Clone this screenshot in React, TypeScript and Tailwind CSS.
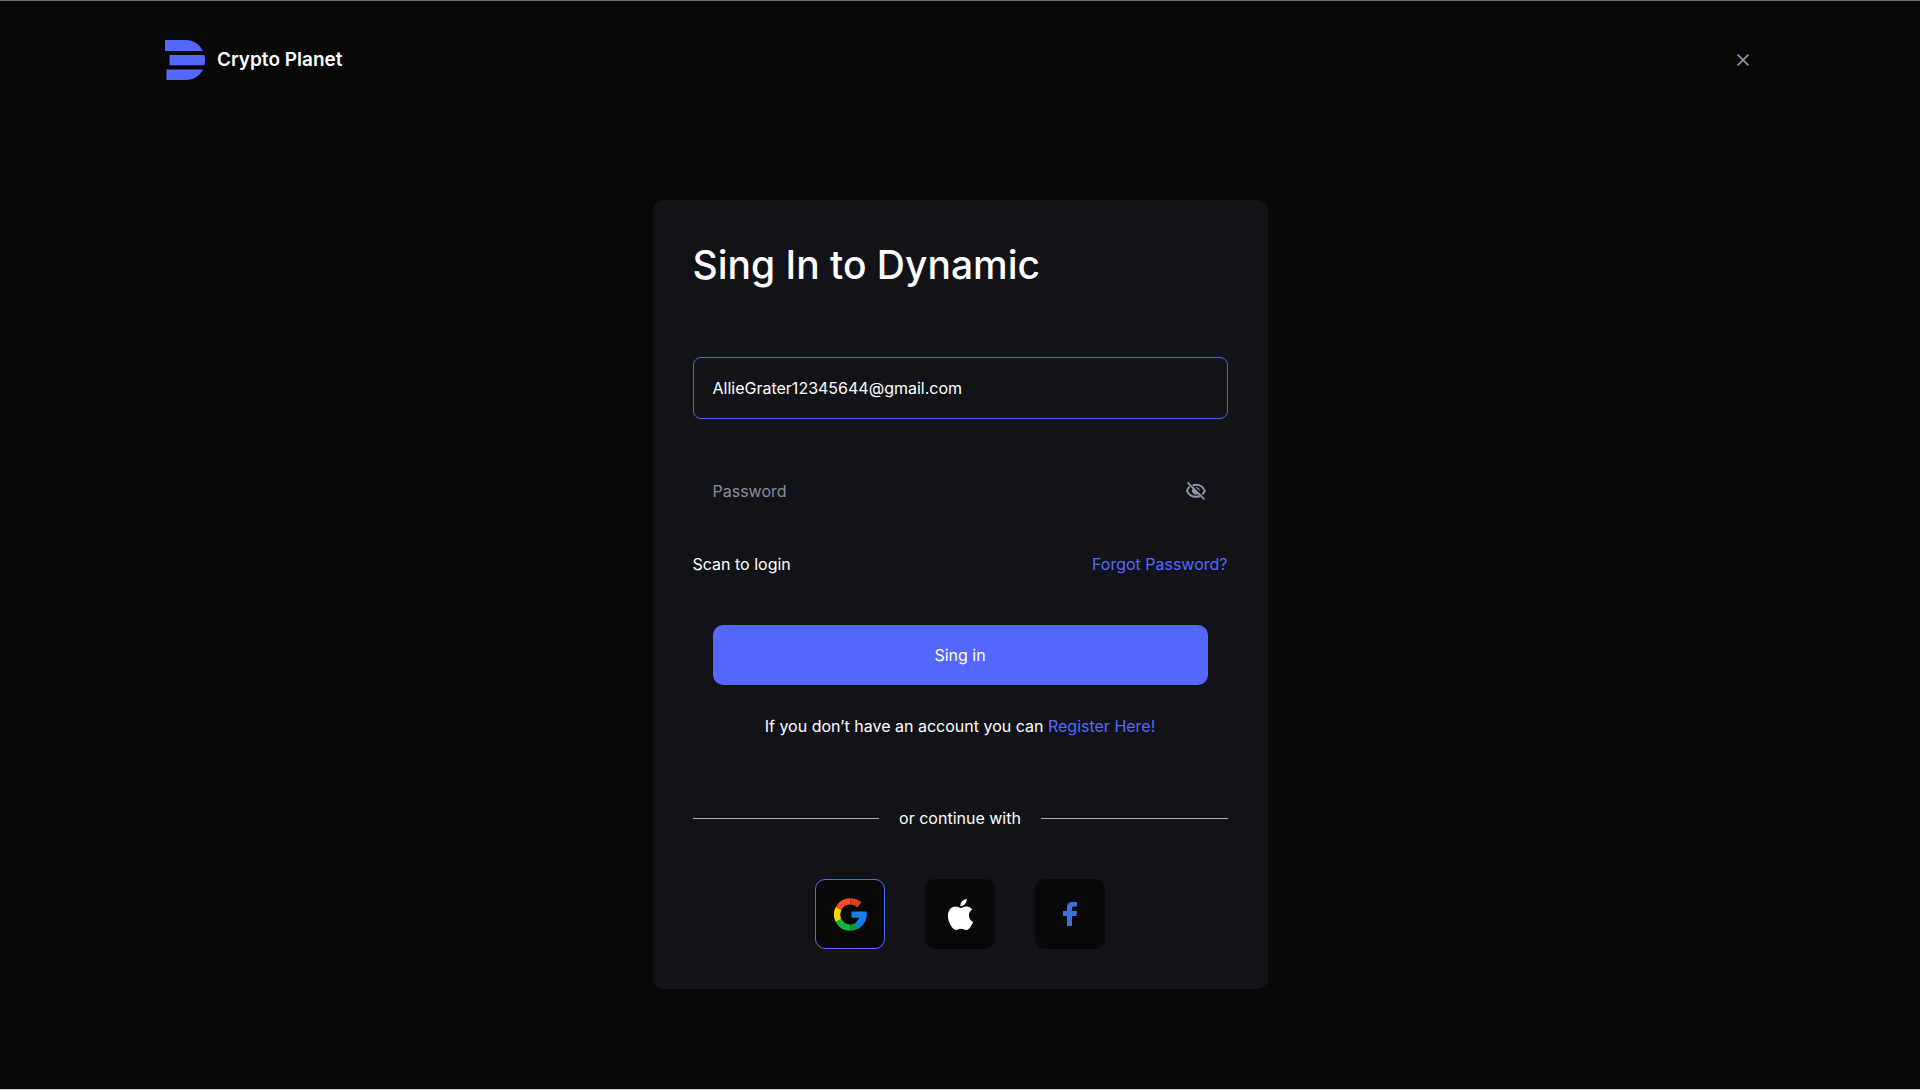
import { useState } from "react";
import type { ReactNode } from "react";

function Logo() {
  return (
    <svg viewBox="0 0 40 40" className="size-10" fill="#5468ff" aria-hidden="true">
      <path d="M0 0h21c7.500 0 13.500 4.500 17 11H0z" />
      <path d="M4.500 15h34.900c.8 3.500.8 7 0 10.200H4.500z" />
      <path d="M1.500 29.500H38C34.500 36 28.500 40 21 40H1.500z" />
    </svg>
  );
}

function EyeOff() {
  return (
    <svg viewBox="0 0 24 24" className="size-6" fill="none" stroke="#9494a8" strokeWidth="1.900" aria-hidden="true">
      <path d="M8.600 6.300c1-.3 2.200-.5 3.400-.5 4 0 7.200 2.200 8.800 6-.6 1.400-1.500 2.500-2.500 3.500" />
      <path d="M5.600 7.800c-1.100 1-2 2.300-2.600 4 1.600 3.800 5 6 9 6 1.400 0 2.700-.3 3.900-.8" />
      <path d="M3.400 3.400 20.400 20.400" />
      <path d="M9 9.300a3.900 3.900 0 0 0 5.700 5.300z" fill="#9494a8" stroke="none" />
      <path d="M11.600 8a3.900 3.900 0 0 1 4.200 4.200z" fill="#9494a8" stroke="none" />
    </svg>
  );
}

function GoogleIcon() {
  return (
    <svg viewBox="0 0 34 34" className="size-[33px]" fill="none" strokeWidth="6.500" aria-hidden="true">
      <path d="M4.700 10.800A13.600 13.600 0 0 1 17 3.500" stroke="#ff4c26" />
      <path d="M17 3.500a13.600 13.600 0 0 1 9.100 3.500" stroke="#d93f21" />
      <path d="M4.700 10.800a13.600 13.600 0 0 0 0 12.400" stroke="#ffd500" />
      <path d="M4.700 23.200A13.600 13.600 0 0 0 17 30.500" stroke="#17b34a" />
      <path d="M17 30.500a13.600 13.600 0 0 0 7-2" stroke="#0f993e" />
      <path d="M18 14h15.600a16.700 16.700 0 0 1-8.100 17.300l-4-5.200a10 10 0 0 0 4.500-5.700H18z" fill="#167ee6" />
    </svg>
  );
}

function AppleIcon() {
  return (
    <svg viewBox="0 0 24 24" className="size-[31px]" fill="#fff" aria-hidden="true">
      <path d="M12.152 6.896c-.948 0-2.415-1.078-3.960-1.040-2.040.027-3.910 1.183-4.961 3.014-2.117 3.675-.546 9.103 1.519 12.090 1.013 1.454 2.208 3.090 3.792 3.039 1.520-.065 2.090-.987 3.935-.987 1.831 0 2.350.987 3.960.948 1.637-.026 2.676-1.480 3.676-2.948 1.156-1.688 1.636-3.325 1.662-3.415-.039-.013-3.182-1.221-3.220-4.857-.026-3.040 2.480-4.494 2.597-4.559-1.429-2.090-3.623-2.324-4.390-2.376-2-.156-3.675 1.090-4.610 1.090zM15.530 3.830c.843-1.012 1.400-2.427 1.245-3.830-1.207.052-2.662.805-3.532 1.818-.780.896-1.454 2.338-1.273 3.714 1.338.104 2.715-.688 3.559-1.701" />
    </svg>
  );
}

function FacebookIcon() {
  return (
    <svg viewBox="0 0 14 24" className="h-6 w-[14px]" fill="#4070de" aria-hidden="true">
      <path d="M4 24V14H0V9h4V5.700C4 2 6 0 9.600 0H14v4.500h-3C9.500 4.500 9 5.200 9 6.500V9h5l-.6 5H9v10z" />
    </svg>
  );
}

function SocialButton({ label, selected, onSelect, children }: { label: string; selected: boolean; onSelect: () => void; children: ReactNode }) {
  return (
    <button
      type="button"
      aria-label={label}
      aria-pressed={selected}
      onClick={onSelect}
      className={`flex size-[70px] items-center justify-center rounded-[10px] border bg-[#080808] ${selected ? "border-[#5468ff]" : "border-transparent"}`}
    >
      {children}
    </button>
  );
}

export default function App() {
  const [email, setEmail] = useState("AllieGrater12345644@gmail.com");
  const [password, setPassword] = useState("");
  const [visible, setVisible] = useState(false);
  const [provider, setProvider] = useState("google");

  return (
    <div className="flex min-h-screen flex-col border-t border-b border-t-[#6b6b6b] border-b-[#c4c4c4] bg-[#080808] font-['Inter',sans-serif] text-base text-white">
      <header className="flex items-center justify-between px-6 pt-[39px] lg:px-[165px]">
        <a href="#" className="flex items-center gap-3">
          <Logo />
          <span className="text-[19px] leading-7 font-semibold">Crypto Planet</span>
        </a>
        <button type="button" aria-label="Close" className="flex size-6 items-center justify-center">
          <svg viewBox="0 0 12 12" className="size-3" stroke="#9494a8" strokeWidth="1.700" aria-hidden="true">
            <path d="M.6.600l10.800 10.800M11.400.6.600 11.400" />
          </svg>
        </button>
      </header>

      <main className="flex justify-center px-4 pt-[120px] pb-10">
        <form onSubmit={(e) => e.preventDefault()} className="flex w-full max-w-[615px] flex-col rounded-[10px] bg-[#121318] p-10">
          <h1 className="text-[39px] leading-[50px] font-medium">Sing In to Dynamic</h1>

          <input
            aria-label="Email"
            type="email"
            value={email}
            onChange={(e) => setEmail(e.target.value)}
            className="mt-[67px] h-[62px] w-full rounded-lg border border-[#4b5de6] bg-transparent px-[19px] outline-none"
          />

          <div className="mt-[41px] flex h-[62px] items-center px-5">
            <input
              aria-label="Password"
              type={visible ? "text" : "password"}
              placeholder="Password"
              value={password}
              onChange={(e) => setPassword(e.target.value)}
              className="min-w-0 flex-1 bg-transparent outline-none placeholder:text-[#8b8b9d]"
            />
            <button type="button" aria-label="Show password" aria-pressed={visible} onClick={() => setVisible(!visible)}>
              <EyeOff />
            </button>
          </div>

          <div className="mt-[30px] flex justify-between">
            <a href="#">Scan to login</a>
            <a href="#" className="text-[#5468ff]">Forgot Password?</a>
          </div>

          <button type="submit" className="mx-5 mt-[49px] h-[60px] rounded-[10px] bg-[#5468ff]">Sing in</button>

          <p className="mt-[29px] text-center">
            If you don’t have an account you can <a href="#" className="text-[#5468ff]">Register Here!</a>
          </p>

          <div className="mt-[68px] flex items-center gap-5">
            <span className="h-px flex-1 bg-[#b0b0b2]" />
            <span>or continue with</span>
            <span className="h-px flex-1 bg-[#b0b0b2]" />
          </div>

          <div className="mt-[49px] flex justify-center gap-10">
            <SocialButton label="Continue with Google" selected={provider === "google"} onSelect={() => setProvider("google")}>
              <GoogleIcon />
            </SocialButton>
            <SocialButton label="Continue with Apple" selected={provider === "apple"} onSelect={() => setProvider("apple")}>
              <AppleIcon />
            </SocialButton>
            <SocialButton label="Continue with Facebook" selected={provider === "facebook"} onSelect={() => setProvider("facebook")}>
              <FacebookIcon />
            </SocialButton>
          </div>
        </form>
      </main>
    </div>
  );
}
